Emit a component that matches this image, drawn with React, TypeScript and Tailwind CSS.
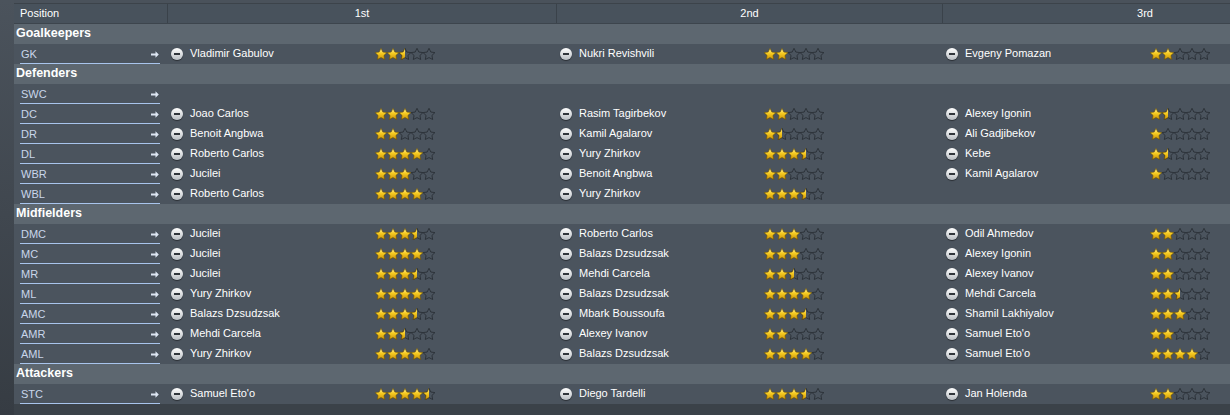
import React from "react";

type P = [string, number] | null;
type Row = { pos: string; p: [P, P, P] };
type Group = { name: string; rows: Row[] };

const groups: Group[] = [
  { name: "Goalkeepers", rows: [{ pos: "GK", p: [["Vladimir Gabulov", 2.5], ["Nukri Revishvili", 2], ["Evgeny Pomazan", 2]] }] },
  {
    name: "Defenders",
    rows: [
      { pos: "SWC", p: [null, null, null] },
      { pos: "DC", p: [["Joao Carlos", 3], ["Rasim Tagirbekov", 2], ["Alexey Igonin", 1.5]] },
      { pos: "DR", p: [["Benoit Angbwa", 2], ["Kamil Agalarov", 1.5], ["Ali Gadjibekov", 1]] },
      { pos: "DL", p: [["Roberto Carlos", 4], ["Yury Zhirkov", 3.5], ["Kebe", 1.5]] },
      { pos: "WBR", p: [["Jucilei", 3], ["Benoit Angbwa", 2], ["Kamil Agalarov", 1]] },
      { pos: "WBL", p: [["Roberto Carlos", 4], ["Yury Zhirkov", 3.5], null] },
    ],
  },
  {
    name: "Midfielders",
    rows: [
      { pos: "DMC", p: [["Jucilei", 3.5], ["Roberto Carlos", 3], ["Odil Ahmedov", 2]] },
      { pos: "MC", p: [["Jucilei", 4], ["Balazs Dzsudzsak", 3], ["Alexey Igonin", 2]] },
      { pos: "MR", p: [["Jucilei", 3.5], ["Mehdi Carcela", 2.5], ["Alexey Ivanov", 2]] },
      { pos: "ML", p: [["Yury Zhirkov", 4], ["Balazs Dzsudzsak", 4], ["Mehdi Carcela", 2.5]] },
      { pos: "AMC", p: [["Balazs Dzsudzsak", 3.5], ["Mbark Boussoufa", 3.5], ["Shamil Lakhiyalov", 3]] },
      { pos: "AMR", p: [["Mehdi Carcela", 2.5], ["Alexey Ivanov", 2], ["Samuel Eto'o", 2]] },
      { pos: "AML", p: [["Yury Zhirkov", 4], ["Balazs Dzsudzsak", 4], ["Samuel Eto'o", 4]] },
    ],
  },
  { name: "Attackers", rows: [{ pos: "STC", p: [["Samuel Eto'o", 4.5], ["Diego Tardelli", 3.5], ["Jan Holenda", 2]] }] },
];

const STAR =
  "M6 0.3 L7.85 4.05 L11.9 4.6 L8.95 7.45 L9.7 11.5 L6 9.6 L2.3 11.5 L3.05 7.45 L0.1 4.6 L4.15 4.05 Z";

function StarSvg({ filled }: { filled: boolean }) {
  return (
    <svg width="12" height="12" viewBox="0 0 12 12" className="block">
      <defs>
        <linearGradient id="sg" x1="0" y1="0" x2="0" y2="1">
          <stop offset="0" stopColor="#fff3a0" />
          <stop offset="0.45" stopColor="#f7cc22" />
          <stop offset="1" stopColor="#c99208" />
        </linearGradient>
      </defs>
      {filled ? (
        <path d={STAR} fill="url(#sg)" stroke="#6e5200" strokeWidth="0.6" strokeLinejoin="round" />
      ) : (
        <path d={STAR} fill="none" stroke="#2a3037" strokeWidth="0.9" strokeLinejoin="round" />
      )}
    </svg>
  );
}

function Stars({ v }: { v: number }) {
  return (
    <div className="flex">
      {[0, 1, 2, 3, 4].map((i) => {
        const f = v - i;
        return (
          <div key={i} className="relative w-[12px] h-[12px]">
            <StarSvg filled={f >= 1} />
            {f === 0.5 && (
              <div className="absolute left-0 top-0 h-[12px] w-[6px] overflow-hidden">
                <StarSvg filled />
              </div>
            )}
          </div>
        );
      })}
    </div>
  );
}

function Minus() {
  return (
    <div className="w-[12px] h-[12px] rounded-full bg-gradient-to-b from-[#ffffff] to-[#b9bec3] flex items-center justify-center shadow-[0_1px_1px_rgba(0,0,0,0.45)]">
      <div className="w-[6px] h-[2px] bg-[#30353b]" />
    </div>
  );
}

function Cell({ p }: { p: P }) {
  return (
    <div className="flex items-center h-[20px]">
      {p && (
        <>
          <div className="w-[3px]" />
          <Minus />
          <div className="w-[192px] pl-[7px] pb-[1px] text-white text-[11px]">{p[0]}</div>
          <Stars v={p[1]} />
        </>
      )}
    </div>
  );
}

function Arrow() {
  return (
    <svg width="8" height="7" viewBox="0 0 8 7" className="block">
      <path d="M0 2.6 H4.5 V0.3 L7.8 3.5 L4.5 6.7 V4.4 H0 Z" fill="#dde6f3" />
    </svg>
  );
}

export default function App() {
  return (
    <div
      className="w-[1230px] h-[415px] overflow-hidden flex bg-[#3b4249]"
      style={{ fontFamily: '"Liberation Sans", Arial, sans-serif' }}
    >
      <div className="w-[14px] shrink-0 bg-gradient-to-b from-[#4b535c] to-[#363c43]" />
      <div className="flex-1 flex flex-col min-w-0">
        <div className="h-[4px] bg-[#4a525b] border-b border-[#3c434a]" />
        <div className="flex h-[20px] bg-[#48525c] text-white text-[11px] border-b border-[#3d454d]">
          <div className="w-[154px] shrink-0 pl-[6px] flex items-center border-r border-[#3a424a]">Position</div>
          <div className="w-[389px] shrink-0 flex items-center justify-center border-r border-[#3a424a]">1st</div>
          <div className="w-[386px] shrink-0 flex items-center justify-center border-r border-[#3a424a]">2nd</div>
          <div className="w-[404px] shrink-0 flex items-center justify-center">3rd</div>
        </div>
        {groups.map((g) => (
          <div key={g.name} className="flex flex-col">
            <div className="h-[20px] bg-[#5d6770] flex items-center pl-[2px] pb-[1px] text-white text-[12.5px] font-bold">
              {g.name}
            </div>
            {g.rows.map((r) => (
              <div key={r.pos} className="flex h-[20px] bg-[#4b545e] items-center">
                <div className="w-[154px] shrink-0 pl-[6px] pr-[8px] h-[20px] flex items-center">
                  <div className="flex-1 h-[18px] mt-[1px] flex items-center justify-between border-b border-[#a8c4ec] pl-[1px] pr-[1px]">
                    <span className="text-[#c9d6ea] text-[11px]">{r.pos}</span>
                    <Arrow />
                  </div>
                </div>
                <div className="w-[389px] shrink-0 flex items-center">
                  <Cell p={r.p[0]} />
                </div>
                <div className="w-[386px] shrink-0 flex items-center">
                  <Cell p={r.p[1]} />
                </div>
                <div className="w-[404px] shrink-0 flex items-center">
                  <Cell p={r.p[2]} />
                </div>
              </div>
            ))}
          </div>
        ))}
        <div className="flex-1 bg-[#3b4249]" />
      </div>
    </div>
  );
}
